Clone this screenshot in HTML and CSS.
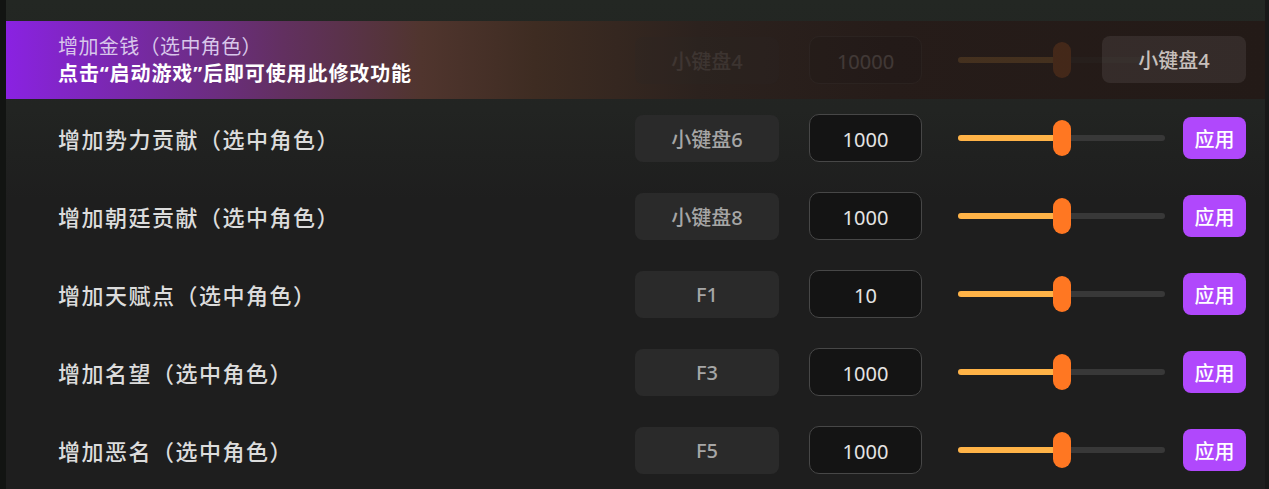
FILE: index.html
```html
<!DOCTYPE html>
<html lang="zh-CN">
<head>
  <meta charset="UTF-8">
  <title>修改器</title>
  <link rel="stylesheet" href="styles.css">
</head>
<body>
  <div class="edge-left"></div>
  <div class="panel">
    <div class="row row-hint">
      <div class="label">
        <div class="hint-title">增加金钱（选中角色）</div>
        <div class="hint-text">点击“启动游戏”后即可使用此修改功能</div>
      </div>
      <div class="key dim">小键盘4</div>
      <div class="num dim">10000</div>
      <div class="slider dim"><div class="fill"></div><div class="thumb"></div></div>
      <button class="apply hidden">应用</button>
      <div class="hotkey">小键盘4</div>
    </div>

    <div class="row">
      <div class="label">增加势力贡献（选中角色）</div>
      <div class="key">小键盘6</div>
      <div class="num">1000</div>
      <div class="slider"><div class="fill"></div><div class="thumb"></div></div>
      <button class="apply">应用</button>
    </div>

    <div class="row">
      <div class="label">增加朝廷贡献（选中角色）</div>
      <div class="key">小键盘8</div>
      <div class="num">1000</div>
      <div class="slider"><div class="fill"></div><div class="thumb"></div></div>
      <button class="apply">应用</button>
    </div>

    <div class="row">
      <div class="label">增加天赋点（选中角色）</div>
      <div class="key">F1</div>
      <div class="num">10</div>
      <div class="slider"><div class="fill"></div><div class="thumb"></div></div>
      <button class="apply">应用</button>
    </div>

    <div class="row">
      <div class="label">增加名望（选中角色）</div>
      <div class="key">F3</div>
      <div class="num">1000</div>
      <div class="slider"><div class="fill"></div><div class="thumb"></div></div>
      <button class="apply">应用</button>
    </div>

    <div class="row">
      <div class="label">增加恶名（选中角色）</div>
      <div class="key">F5</div>
      <div class="num">1000</div>
      <div class="slider"><div class="fill"></div><div class="thumb"></div></div>
      <button class="apply">应用</button>
    </div>
  </div>
  <div class="edge-right"></div>
</body>
</html>
```

FILE: styles.css
```css
body {
  margin: 0;
  height: 489px;
  overflow: hidden;
  display: flex;
  background: #1e1e1e;
  font-family: "Noto Sans", "Noto Sans CJK SC", sans-serif;
}

.edge-left {
  width: 6px;
  background: #121412;
}

.edge-right {
  width: 4px;
  background: #181818;
}

.panel {
  flex: 1;
  padding-top: 21px;
  background: linear-gradient(180deg, #232723 0px, #222422 110px, #1e1e1e 200px);
}

.row {
  position: relative;
  height: 78px;
  display: flex;
  align-items: center;
  padding: 0 19px 0 52px;
}

.label {
  flex: 1;
  font-size: 22px;
  font-weight: 500;
  letter-spacing: 1.5px;
  color: #dcdcdc;
}

.key {
  width: 144px;
  height: 47px;
  border-radius: 8px;
  background: #2a2a2a;
  color: #a6a6a6;
  font-size: 20px;
  font-weight: 500;
  display: flex;
  align-items: center;
  justify-content: center;
}

.num {
  width: 111px;
  height: 43px;
  margin-left: 30px;
  border: 1px solid #474747;
  border-radius: 10px;
  background: #141414;
  color: #e4e4e4;
  font-size: 20px;
  display: flex;
  align-items: center;
  justify-content: center;
  padding-top: 3px;
  box-sizing: content-box;
}

.slider {
  position: relative;
  width: 207px;
  height: 6px;
  margin-left: 36px;
  border-radius: 3px;
  background: #383838;
}

.slider .fill {
  width: 100px;
  height: 6px;
  border-radius: 3px;
  background: #ffb347;
}

.slider .thumb {
  position: absolute;
  left: 95px;
  top: -15px;
  width: 18px;
  height: 36px;
  border-radius: 9px;
  background: #ff7722;
}

.apply {
  width: 63px;
  height: 42px;
  margin-left: 18px;
  border: none;
  border-radius: 8px;
  background: #b048fc;
  color: #ffffff;
  font-family: "Noto Sans CJK SC", sans-serif;
  font-size: 20px;
  font-weight: 500;
  padding: 0;
  cursor: pointer;
}

/* hovered row with hint */
.row-hint {
  background: linear-gradient(90deg, #8a22e2 0%, #722b95 13%, #623060 22%, #50352e 33%, #3e2c22 42%, #2c221e 55%, #261c19 70%, #231a17 100%);
}

.row-hint .label {
  font-size: 20px;
  line-height: 27px;
}

.hint-title {
  color: #d8c6ea;
  font-weight: 400;
  letter-spacing: 0.4px;
}

.hint-text {
  color: #ffffff;
  font-weight: bold;
  letter-spacing: 0.9px;
}

.dim {
  opacity: 0.14;
}

.hidden {
  visibility: hidden;
}

.hotkey {
  position: absolute;
  right: 19px;
  top: 15px;
  width: 144px;
  height: 47px;
  border-radius: 8px;
  background: rgba(255, 255, 255, 0.08);
  color: #c8c0bc;
  font-size: 20px;
  font-weight: 500;
  display: flex;
  align-items: center;
  justify-content: center;
}
```
